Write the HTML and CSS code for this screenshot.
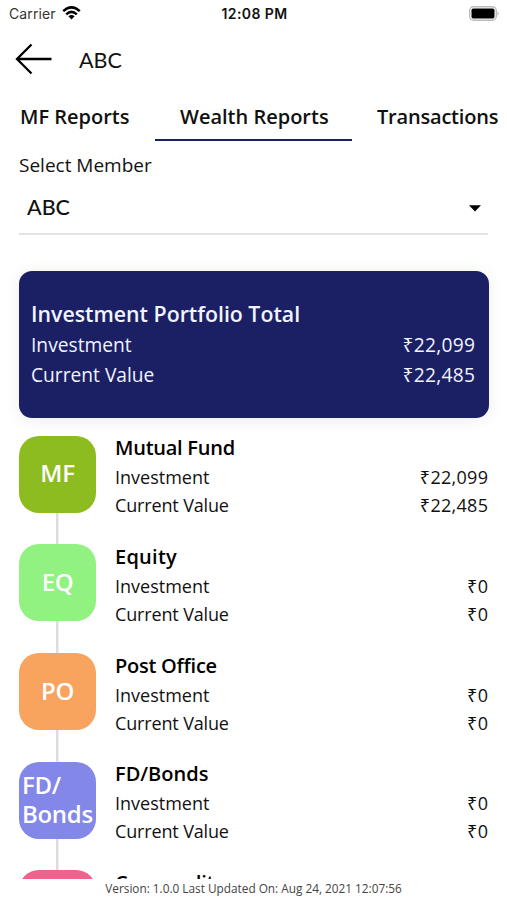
FILE: index.html
```html
<!DOCTYPE html>
<html lang="en">
<head>
<meta charset="utf-8">
<title>Wealth Reports</title>
<link rel="stylesheet" href="styles.css">
</head>
<body>
<div class="status">
  <div class="carrier"><span>Carrier</span>
    <svg width="19" height="14" viewBox="0 0 19 14"><g fill="none" stroke="#000" stroke-width="2.500"><path d="M1.200 5.200Q9.500 -2.500 17.800 5.200"/><path d="M4.200 8.300Q9.500 3.400 14.800 8.300"/></g><path d="M6.400 10.300Q9.500 7.700 12.600 10.300L9.500 13.500Z"/></svg>
  </div>
  <div class="clock">12:08 PM</div>
  <svg class="battery" width="31" height="15" viewBox="0 0 31 15"><rect x=".7" y=".7" width="26.600" height="13.600" rx="4" fill="#fff" stroke="#bbb" stroke-width="1.400"/><rect x="2.500" y="2.500" width="23" height="10" rx="1.700"/><path d="M28.500 5Q31 7.500 28.500 10Z" fill="#bbb"/></svg>
</div>
<header class="header">
  <svg width="37" height="32" viewBox="0 0 37 32" fill="none" stroke="#000" stroke-width="2.300"><path d="M16.500 1.500L2 16L16.500 30.500M2 16H36.500"/></svg>
  <h1>ABC</h1>
</header>
<nav class="tabs">
  <div class="tab">MF Reports</div>
  <div class="tab active">Wealth Reports</div>
  <div class="tab last">Transactions</div>
</nav>
<main class="content">
  <div class="label">Select Member</div>
  <div class="select"><span>ABC</span><svg width="12" height="7" viewBox="0 0 12 7"><path d="M0 .3H12L6 6.500Z"/></svg></div>
  <section class="total">
    <h2>Investment Portfolio Total</h2>
    <div class="row"><span>Investment</span><span class="amt">₹22,099</span></div>
    <div class="row"><span>Current Value</span><span class="amt">₹22,485</span></div>
  </section>
  <section class="list">
    <article class="item"><div class="rail"><div class="badge mf">MF</div></div><div class="info"><h3>Mutual Fund</h3><div class="row"><span>Investment</span><span class="amt">₹22,099</span></div><div class="row"><span class="cur">Current Value</span><span class="amt">₹22,485</span></div></div></article>
    <article class="item"><div class="rail"><div class="badge eq">EQ</div></div><div class="info"><h3 class="wide">Equity</h3><div class="row"><span>Investment</span><span class="amt">₹0</span></div><div class="row"><span class="cur">Current Value</span><span class="amt">₹0</span></div></div></article>
    <article class="item"><div class="rail"><div class="badge po">PO</div></div><div class="info"><h3>Post Office</h3><div class="row"><span>Investment</span><span class="amt">₹0</span></div><div class="row"><span class="cur">Current Value</span><span class="amt">₹0</span></div></div></article>
    <article class="item"><div class="rail"><div class="badge fd">FD/<br>Bonds</div></div><div class="info"><h3 class="even">FD/Bonds</h3><div class="row"><span>Investment</span><span class="amt">₹0</span></div><div class="row"><span class="cur">Current Value</span><span class="amt">₹0</span></div></div></article>
    <article class="item"><div class="rail"><div class="badge co"></div></div><div class="info"><h3>Commodity</h3></div></article>
  </section>
</main>
<footer class="footer"><span>Version: 1.0.0 Last Updated On: Aug 24, 2021 12:07:56</span></footer>
</body>
</html>
```
FILE: styles.css
```css
* { box-sizing: border-box; margin: 0; }
body { width: 507px; height: 900px; overflow: hidden; display: flex; flex-direction: column; background: #fff; color: #111; font-family: "Open Sans", "Noto Sans", sans-serif; white-space: nowrap; }
svg { display: block; flex: none; }
.status { height: 27px; flex: none; display: grid; grid-template-columns: 1fr auto 1fr; align-items: center; padding: 0 7px 1px 9px; font: 14px/26px Inter, sans-serif; }
.carrier { display: flex; gap: 6px; align-items: center; color: #333; letter-spacing: .1px; }
.carrier span, .clock { padding-top: 2px; line-height: 24px; }
.carrier svg { margin-top: -1px; }
.clock { font-weight: 600; font-size: 14px; letter-spacing: .4px; }
.battery { justify-self: end; }
.header { height: 64px; flex: none; display: flex; align-items: center; padding-left: 15px; gap: 27px; }
.header h1 { font: 400 21.500px/30px Lato, sans-serif; padding-top: 2px; }
.tabs { height: 51px; flex: none; display: flex; margin-left: -4px; }
.tab { flex: none; padding: 0 25px; height: 51px; line-height: 51px; font-size: 20px; font-weight: 600; }
.tab:first-child { width: 159px; padding-left: 24px; }
.tab.active { width: 197px; margin-top: -1px; line-height: 53px; border-bottom: 2.500px solid #1a2063; }
.tab.last { letter-spacing: -.2px; }
.content { height: 737px; flex: none; overflow: hidden; padding: 0 19px; }
.label { height: 47px; line-height: 46px; font-size: 19px; }
.select { height: 45.700px; border-bottom: 2px solid #e4e4e4; padding: 0 7px 6px 8px; display: flex; justify-content: space-between; align-items: center; font: 500 21.500px/30px Lato, sans-serif; }
.select span { margin-top: -1px; }
.select svg { margin-top: 1px; }
.total { height: 147px; margin: 36px -1px 18px 0; border-radius: 13px; background: #1a2063; color: #f1f3ff; padding: 27.300px 14px 0 12px; box-shadow: 0 2px 16px rgba(0,0,0,.08); }
.total h2 { font-size: 21.300px; line-height: 32px; font-weight: 600; }
.row { display: flex; justify-content: space-between; }
.total .row { font-size: 19.200px; line-height: 30px; }
.amt { letter-spacing: .3px; margin-right: -.3px; }
.item { display: flex; height: 108.700px; }
.rail { width: 77px; flex: none; background: linear-gradient(#ddd, #ddd) center / 2.500px 100% no-repeat; }
.badge { width: 77px; height: 77px; border-radius: 20px; color: #fff; font-size: 24px; line-height: 29px; font-weight: 600; display: flex; align-items: center; justify-content: center; padding-bottom: 3px; letter-spacing: -.3px; }
.mf { background: #8dbc21; }
.eq { background: #91f181; }
.po { background: #f8a45f; }
.fd { background: #8287e8; justify-content: flex-start; padding-left: 3px; }
.co { background: #f0628b; }
.info { flex: 1; padding-left: 19px; }
.info h3 { font-size: 20px; line-height: 26px; font-weight: 600; color: #000; letter-spacing: -.25px; margin-top: -.3px; }
.info h3.wide { letter-spacing: .25px; }
.info h3.even { letter-spacing: 0; }
.info .row { font-size: 18px; line-height: 28px; padding-top: 2px; height: 30px; }
.info .row + .row { padding-top: 0; height: 28px; }
.info .cur { letter-spacing: -.15px; }
.footer { flex: 1; display: flex; justify-content: center; font-size: 11.800px; line-height: 19px; color: #444; background: #fff; }
```
